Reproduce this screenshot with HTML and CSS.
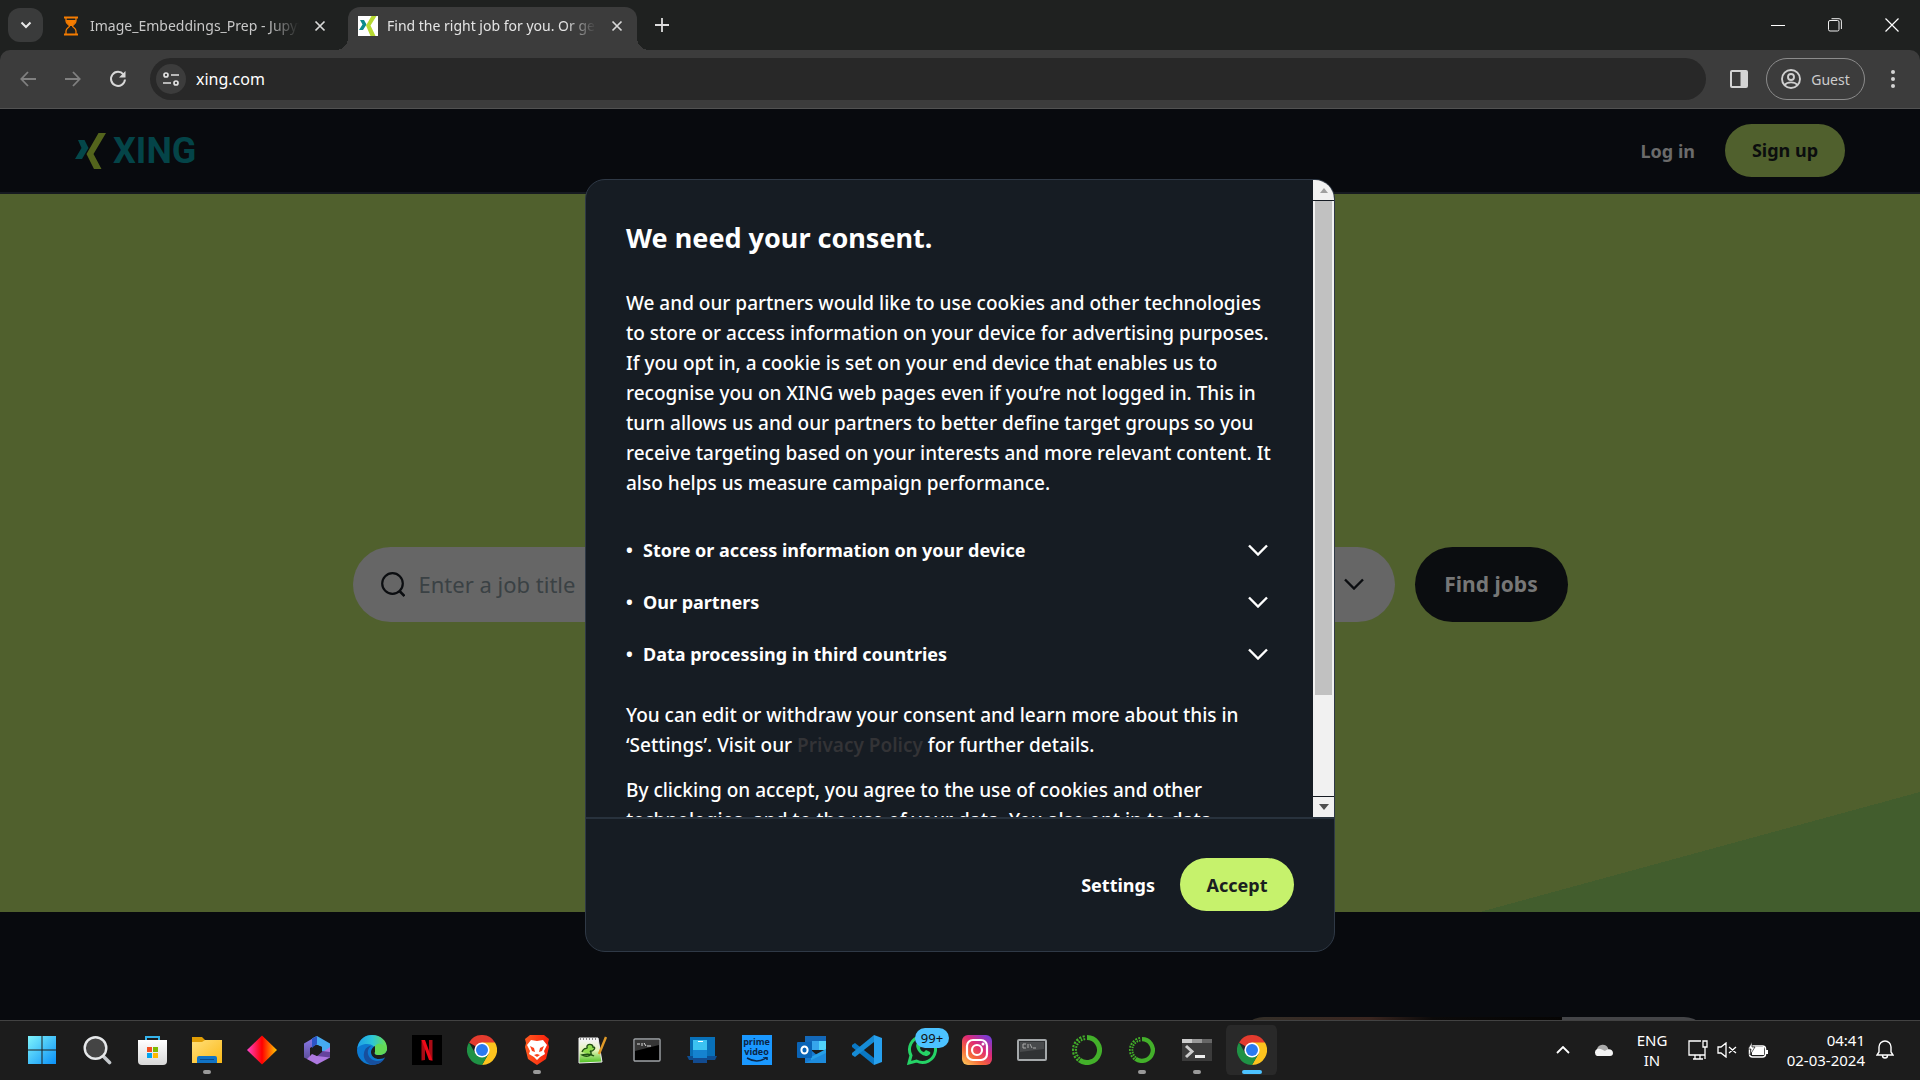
FILE: index.html
```html
<!DOCTYPE html>
<html lang="en">
<head>
<meta charset="utf-8">
<title>Find the right job for you. Or get found. | XING</title>
<link rel="stylesheet" href="styles.css">
</head>
<body>
<svg width="0" height="0" class="defs" aria-hidden="true">
  <defs>
    <linearGradient id="win" x1="0" y1="0" x2="1" y2="1"><stop offset="0" stop-color="#7ff4fb"/><stop offset="1" stop-color="#0a90f8"/></linearGradient>
    <linearGradient id="bag" x1="0" y1="0" x2="0" y2="1"><stop offset="0" stop-color="#fff"/><stop offset="1" stop-color="#d8d8d8"/></linearGradient>
    <linearGradient id="folder" x1="0" y1="0" x2="1" y2="1"><stop offset="0" stop-color="#ffdf7a"/><stop offset="1" stop-color="#fbb917"/></linearGradient>
    <linearGradient id="dia"><stop offset="0" stop-color="#f4c"/><stop offset=".5" stop-color="#f00"/><stop offset="1" stop-color="#fc0"/></linearGradient>
    <linearGradient id="edgeTop"><stop offset="0" stop-color="#1e9fe8"/><stop offset=".5" stop-color="#2cc6d8"/><stop offset="1" stop-color="#6ee04a"/></linearGradient>
    <linearGradient id="brave"><stop offset="0" stop-color="#ff5a20"/><stop offset="1" stop-color="#f8200c"/></linearGradient>
    <linearGradient id="note" x1="0" y1="0" x2="0" y2="1"><stop offset=".1" stop-color="#f4f4f4"/><stop offset=".5" stop-color="#e4f3b8"/><stop offset="1" stop-color="#49c01c"/></linearGradient>
    <linearGradient id="insta" x1="0" y1="1" x2=".8" y2="0"><stop offset="0" stop-color="#fed35c"/><stop offset=".35" stop-color="#f5673a"/><stop offset=".65" stop-color="#e02a74"/><stop offset="1" stop-color="#7b3bd4"/></linearGradient>
    <linearGradient id="m1" x1="0" y1="0" x2="0" y2="1"><stop offset="0" stop-color="#8e7df0"/><stop offset="1" stop-color="#5a4b96"/></linearGradient>
    <symbol id="chrome" viewBox="0 0 30 30">
      <path d="M15 15 2 7.500A15 15 0 0 1 28 7.500Z" fill="#e33b2e"/>
      <path d="M28 7.500A15 15 0 0 1 15 30L21.500 18.700 15 7.500Z" fill="#fcc31e"/>
      <path d="M2 7.500A15 15 0 0 0 15 30L21.500 18.700 8.500 18.700Z" fill="#1f9245"/>
      <circle cx="15" cy="15" r="7.600" fill="#fff"/><circle cx="15" cy="15" r="6" fill="#2a7af0"/>
    </symbol>
    <symbol id="chevron" viewBox="0 0 20 12"><path d="m1 1.500 9 9 9-9" fill="none" stroke="currentColor" stroke-width="2.400"/></symbol>
    <symbol id="cross" viewBox="0 0 12 12"><path d="m1.500 1.500 9 9m0-9-9 9" fill="none" stroke="currentColor" stroke-width="1.700"/></symbol>
    <symbol id="ring" viewBox="0 0 30 30">
      <path d="M15 2.500A12.500 12.500 0 1 1 7.500 25" fill="none" stroke="#43b02a" stroke-width="5"/>
      <path d="M13 2.600A12.500 12.500 0 0 0 7.500 25" fill="none" stroke="#43b02a" stroke-width="5" stroke-dasharray="2 1.300"/>
      <path d="M13 2.600A12.500 12.500 0 0 0 7.500 25" fill="none" stroke="#1c1c1c" stroke-width="1" stroke-dasharray="3 1"/>
    </symbol>
  </defs>
</svg>

<div class="screen">
  <div class="tabstrip">
    <button class="tab-search" aria-label="Search tabs"><svg width="12" height="8" viewBox="0 0 12 8"><path d="m1.500 1.500 4.500 4.500 4.500-4.500" fill="none" stroke="#e8e8e8" stroke-width="2"/></svg></button>
    <div class="tab">
      <svg width="20" height="20" viewBox="0 0 20 20"><path d="M3 1.500h14M3 18.500h14" stroke="#f57c00" stroke-width="2"/><path d="M5 2v3c0 3 3.500 3.500 3.500 5S5 12 5 15v3M15 2v3c0 3-3.500 3.500-3.500 5s3.500 2 3.500 5v3" fill="none" stroke="#f57c00" stroke-width="1.300"/><path d="M5 4h10c0 3-3.500 4-3.500 6h-3C8.500 8 5 7 5 4Z" fill="#f57c00"/></svg>
      <span class="tab-title">Image_Embeddings_Prep - Jupyter</span>
      <button class="tab-close" aria-label="Close tab"><svg width="12" height="12"><use href="#cross"/></svg></button>
    </div>
    <div class="tab tab-active">
      <svg width="20" height="20" viewBox="0 0 20 20"><path d="M0 0h20v20H0z" fill="#fff"/><path d="M2 4h4l2.500 4.500L5 14H1l3.500-5.500Z" fill="#0a8a8c"/><path d="M13.500 0h5l-6 9.500 5 10.500h-5L8 9.500Z" fill="#b6d832"/></svg>
      <span class="tab-title">Find the right job for you. Or get</span>
      <button class="tab-close" aria-label="Close tab"><svg width="12" height="12"><use href="#cross"/></svg></button>
    </div>
    <button class="new-tab" aria-label="New tab"><svg width="14" height="14" viewBox="0 0 14 14"><path d="M7 0v14M0 7h14" stroke="#ddd" stroke-width="1.800"/></svg></button>
    <div class="window-controls">
      <button aria-label="Minimize"><svg width="14" height="14" viewBox="0 0 14 14"><path d="M0 7.500h14" stroke="#fff"/></svg></button>
      <button aria-label="Restore"><svg width="14" height="14" viewBox="0 0 14 14"><rect x=".5" y="2.500" width="10.500" height="10.500" rx="1.500" fill="none" stroke="#eee"/><path d="M3.500.7H11a2.400 2.400 0 0 1 2.400 2.400V11" fill="none" stroke="#eee"/></svg></button>
      <button aria-label="Close"><svg width="14" height="14" viewBox="0 0 14 14"><path d="m.5.500 13 13m0-13-13 13" stroke="#fff" stroke-width="1.200"/></svg></button>
    </div>
  </div>

  <div class="toolbar">
    <div class="nav">
      <button aria-label="Back" disabled><svg width="16" height="16" viewBox="0 0 16 16"><path d="M16 8H1.500M8 1 1.300 8 8 15" fill="none" stroke="#808080" stroke-width="1.800"/></svg></button>
      <button aria-label="Forward" disabled><svg width="16" height="16" viewBox="0 0 16 16"><path d="M0 8h14.500M8 1l6.700 7L8 15" fill="none" stroke="#808080" stroke-width="1.800"/></svg></button>
      <button aria-label="Reload"><svg width="18" height="18" viewBox="0 0 18 18"><path d="M14.500 4.500A7 7 0 1 0 16 9.500" fill="none" stroke="#d8d8d8" stroke-width="2"/><path d="M16.500 1v6.500H10Z" fill="#d8d8d8"/></svg></button>
    </div>
    <div class="omnibox">
      <button class="site-info" aria-label="Site information"><svg width="16" height="14" viewBox="0 0 16 14"><g fill="none" stroke="#e0e0e0" stroke-width="1.700"><circle cx="3" cy="3" r="2"/><path d="M8 3h8M0 11h8"/><circle cx="13" cy="11" r="2"/></g></svg></button>
      <input class="url" type="text" value="xing.com" aria-label="Address">
    </div>
    <button class="side-panel" aria-label="Side panel"><svg width="18" height="18" viewBox="0 0 18 18"><rect x="1" y="1" width="16" height="16" rx="1" fill="none" stroke="#d4d4d4" stroke-width="2"/><path d="M10.500 1H17v16h-6.500z" fill="#d4d4d4"/></svg></button>
    <button class="guest"><svg width="20" height="20" viewBox="0 0 20 20"><g fill="none" stroke="#d0d0d0" stroke-width="1.900"><circle cx="10" cy="10" r="9"/><circle cx="10" cy="8" r="3"/><path d="M3.500 16c3-3.500 10-3.500 13 0"/></g></svg>Guest</button>
    <button class="menu" aria-label="Menu"><svg width="4" height="18" viewBox="0 0 4 18"><g fill="#d4d4d4"><circle cx="2" cy="2" r="2"/><circle cx="2" cy="9" r="2"/><circle cx="2" cy="16" r="2"/></g></svg></button>
  </div>

  <div class="viewport">
    <header class="site-header">
      <a class="logo" href="#" aria-label="XING"><svg width="32" height="36" viewBox="0 0 32 36"><path d="M3 7h6.500l4 8-6.500 11H0l6.500-11Z" fill="#04474a"/><path d="M23.500 0H31L18.500 21 26.500 36H19L11.500 21Z" fill="#53641c"/></svg><span>XING</span></a>
      <nav><a class="login" href="#">Log in</a><a class="signup" href="#">Sign up</a></nav>
    </header>
    <main>
      <section class="hero">
        <form class="search">
          <div class="search-box">
            <svg width="24" height="25" viewBox="0 0 24 25"><circle cx="11.500" cy="11.500" r="10.300" fill="none" stroke="#0b0d10" stroke-width="2.200"/><path d="m18 18.500 5.500 5.500" stroke="#0b0d10" stroke-width="2.600"/></svg>
            <input type="text" placeholder="Enter a job title" aria-label="Job title">
            <button type="button" aria-label="More filters"><svg width="20" height="12"><use href="#chevron"/></svg></button>
          </div>
          <button class="find" type="button">Find jobs</button>
        </form>
      </section>
      <section class="below"><div class="teaser"><div class="teaser-photo"></div><div class="teaser-text"></div></div></section>
    </main>

    <div class="overlay">
      <div class="dialog" role="dialog" aria-labelledby="consent-title">
        <div class="dialog-main">
          <div class="dialog-body">
            <h2 id="consent-title">We need your consent.</h2>
            <p class="intro">We and our partners would like to use cookies and other technologies<br>to store or access information on your device for advertising purposes.<br>If you opt in, a cookie is set on your end device that enables us to<br>recognise you on XING web pages even if you’re not logged in. This in<br>turn allows us and our partners to better define target groups so you<br>receive targeting based on your interests and more relevant content. It<br>also helps us measure campaign performance.</p>
            <ul>
              <li><button><span class="dot">•</span><span>Store or access information on your device</span><svg width="20" height="12"><use href="#chevron"/></svg></button></li>
              <li><button><span class="dot">•</span><span>Our partners</span><svg width="20" height="12"><use href="#chevron"/></svg></button></li>
              <li><button><span class="dot">•</span><span>Data processing in third countries</span><svg width="20" height="12"><use href="#chevron"/></svg></button></li>
            </ul>
            <p>You can edit or withdraw your consent and learn more about this in<br>‘Settings’. Visit our <a href="#">Privacy Policy</a> for further details.</p>
            <p>By clicking on accept, you agree to the use of cookies and other<br>technologies, and to the use of your data. You also opt in to data</p>
          </div>
          <div class="scrollbar" aria-hidden="true">
            <div class="arrow"><svg width="8" height="5" viewBox="0 0 8 5"><path d="M0 5 4 0l4 5z" fill="#a0a0a0"/></svg></div>
            <div class="track"><div class="thumb"></div></div>
            <div class="arrow"><svg width="10" height="6" viewBox="0 0 10 6"><path d="M0 0h10L5 6z" fill="#505050"/></svg></div>
          </div>
        </div>
        <div class="dialog-footer"><button class="settings">Settings</button><button class="accept">Accept</button></div>
      </div>
    </div>
  </div>

  <div class="taskbar">
    <div class="apps">
      <button aria-label="Start"><svg width="30" height="30" viewBox="0 0 30 30"><path d="M1 1h13.500v13.500H1zM15.500 1H29v13.500H15.500zM1 15.500h13.500V29H1zM15.500 15.500H29V29H15.500z" fill="url(#win)"/></svg></button>
      <button aria-label="Search"><svg width="30" height="30" viewBox="0 0 30 30"><path d="m20 20 7.500 7.500" stroke="#c4c8cc" stroke-width="3.600" stroke-linecap="round"/><circle cx="13.500" cy="13" r="10.800" fill="#444" stroke="#e6e8ea" stroke-width="2.400"/></svg></button>
      <button aria-label="Store"><svg width="30" height="30" viewBox="0 0 30 30"><path d="M9 7V2h13v5" fill="none" stroke="#35b4ec" stroke-width="2"/><path d="M1 5h29v21a4 4 0 0 1-4 4H5a4 4 0 0 1-4-4z" fill="url(#bag)"/><path d="M10 12h5v5h-5z" fill="#f25022"/><path d="M16 12h5v5h-5z" fill="#7fba00"/><path d="M10 18h5v5h-5z" fill="#00a4ef"/><path d="M16 18h5v5h-5z" fill="#ffb900"/></svg></button>
      <button class="running" aria-label="File Explorer"><svg width="30" height="30" viewBox="0 0 30 30"><path d="M0 2h10l3 3v4H0z" fill="#e09d05"/><path d="M0 7h10l3-2h17v23H0z" fill="url(#folder)"/><path d="M5 28v-5a2 2 0 0 1 2-2h16a2 2 0 0 1 2 2v5z" fill="#1173c5"/><path d="M8 24.500h14" stroke="#084a8c"/></svg></button>
      <button aria-label="Diamond"><svg width="30" height="30" viewBox="0 0 30 30"><path d="M15 .5 30 15 15 29.500 0 15z" fill="url(#dia)"/></svg></button>
      <button aria-label="Microsoft 365"><svg width="30" height="30" viewBox="0 0 30 30"><path d="M15 1 2 8.500v14l6 3V13l7-4z" fill="url(#m1)"/><path d="M15 1 28 8.500v13L20 16v-4l-7-3-3 2V3.500z" fill="#46aaf0"/><path d="M28 17v5.500L15 29.500 5 24l5-5 5 2 13-9z" fill="#ad78df"/><path d="M10 3.500 15 1v8l-5 4z" fill="#2c54c6"/><path d="m20 16 8 1v5.500L15 21z" fill="#65429c"/><path d="m11 12 4-2 5 2v5l-5 4-4-3z" fill="#1c1c1c"/></svg></button>
      <button aria-label="Edge"><svg width="30" height="30" viewBox="0 0 30 30"><circle cx="15" cy="15" r="15" fill="#0d79d1"/><path d="M.5 13C2 4 8 0 15 0c9 0 15 6 15 13 0 5-4 7-8 7-3 0-5-1-4-3 2-5-3-8-8-8-4 0-8 2-9.500 4Z" fill="url(#edgeTop)"/><path d="M14 11c-6 5-3 14 6 15 4 0 6-1 8-3-3 5-8 7-13 7-7-2-9-8-8-12 1-5 4-7 7-7Z" fill="#174f9d"/><path d="M18 11c-7 4-4 13 4 13 3 0 5-1 7-2l1-2v-5c-2 5-6 5-9 5-3 0-4-1-3-3 1-2 1-4 0-6Z" fill="#1c1c1c"/><path d="M18 11c4-5 10 0 12 2 0 5-4 7-8 7-3 0-5-1-4-3Z" fill="#62d956"/></svg></button>
      <button aria-label="Netflix"><svg width="30" height="30" viewBox="0 0 30 30"><path d="M0 0h30v30H0z" fill="#000"/><path d="M9.500 5H13v20l-3.500.500zM17 5h3.500v20.500L17 25z" fill="#a90b15"/><path d="M9.500 5H13l7.500 20.500L17 25z" fill="#ee0a18"/></svg></button>
      <button aria-label="Chrome"><svg width="30" height="30"><use href="#chrome"/></svg></button>
      <button class="running" aria-label="Brave"><svg width="30" height="30" viewBox="0 0 30 30"><path d="m8 0-5 4 1 4-1 4 3 12 9 6 9-6 3-12-1-4 1-4-5-4z" fill="url(#brave)"/><path d="m9 5 6 1 6-1 4 5-3 6 1 3-5 3-3 3-3-3-5-3 1-3-3-6z" fill="#fff"/><path d="m8 11 4 2 1 4-3-1zM22 11l-4 2-1 4 3-1zM12 20l3-1 3 1-3 2z" fill="#fb401a"/></svg></button>
      <button aria-label="Notepad++"><svg width="30" height="30" viewBox="0 0 30 30"><path d="M2 3h19l4 24-23 1z" fill="url(#note)" stroke="#eee"/><path d="M3 4h18" stroke="#888" stroke-dasharray="1 2" stroke-width="2"/><path d="M5 17c2-6 6-2 5-5s6-4 6 0c4 0 0 5-3 4 4 4-3 7-8 4 4-1 9-1 12 1" fill="#8fdc4e" stroke="#1f4f12" stroke-width="1.400"/><path d="m29 2-7 17" stroke="#e09a28" stroke-width="2.400"/></svg></button>
      <button aria-label="Command Prompt"><svg width="30" height="30" viewBox="0 0 30 30"><rect x="2" y="4" width="26" height="22" rx="1" fill="#000" stroke="#a0a4a8" stroke-width="1.400"/><path d="M3 5h24v5L3 16z" fill="#363636"/><path d="M5 9h3M10 8v3M12 8l2 3M15 11h4" stroke="#ddd"/></svg></button>
      <button aria-label="Phone Link"><svg width="30" height="30" viewBox="0 0 30 30"><path d="M3 2h25v19H3z" fill="#0870b8"/><path d="M0 21h30l-2 4H2z" fill="#0d4e92"/><path d="M6 5h14v23H6z" fill="#1583d0"/><path d="M6 5h14v10H6z" fill="#3cc2f1"/><path d="M6 23h14v5H6z" fill="#124b90"/><path d="M11 6.500h5" stroke="#fff"/></svg></button>
      <button aria-label="Prime Video"><span class="prime"><span>prime</span><span>video</span><svg width="22" height="6" viewBox="0 0 22 6"><path d="M1 1q10 6 19 0m-3-1h4v3" fill="none" stroke="#0b2545" stroke-width="1.500"/></svg></span></button>
      <button aria-label="Outlook"><svg width="30" height="30" viewBox="0 0 30 30"><path d="M8 1h21v14H8z" fill="#1368b8"/><path d="M15 6h7v9h-7z" fill="#36a5ec"/><path d="M22 6h7v9h-7z" fill="#51d3fa"/><path d="M8 15h6l15 13H8z" fill="#167ad1"/><path d="M14 22 29 14v14H14z" fill="#279fe7"/><path d="M8 28 29 18v10z" fill="#1d8bdc"/><rect y="7" width="15" height="16" rx="1" fill="#0a63b5"/><ellipse cx="7.500" cy="15" rx="3.100" ry="3.600" fill="none" stroke="#fff" stroke-width="2"/></svg></button>
      <button aria-label="VS Code"><svg width="30" height="30" viewBox="0 0 30 30"><path d="m0 10 3-2 19 15v7L0 12z" fill="#0a78c4"/><path d="m0 20 3 2L22 7V0L0 18z" fill="#168bd5"/><path d="m22 0 8 3v24l-8 3z" fill="#27a0ee"/></svg></button>
      <button aria-label="WhatsApp"><svg width="30" height="30" viewBox="0 0 30 30"><path d="m2 28 2-7.500A13 13 0 1 1 9.500 26z" fill="none" stroke="#25d366" stroke-width="3"/><path d="M10 8c-3 4 3 13 10 13 3-1 4-3 3-4l-4-2-2 2c-2 0-4-3-4-4l1-2-2-4z" fill="#25d366"/></svg><span class="badge">99+</span></button>
      <button aria-label="Instagram"><svg width="30" height="30" viewBox="0 0 30 30"><rect width="30" height="30" rx="6" fill="url(#insta)"/><g fill="none" stroke="#fff" stroke-width="2.200"><rect x="5" y="5" width="20" height="20" rx="6"/><circle cx="15" cy="15" r="5"/></g><circle cx="21" cy="9" r="1.500" fill="#fff"/></svg></button>
      <button aria-label="Console"><svg width="30" height="30" viewBox="0 0 30 30"><rect x="1" y="5" width="28" height="20" rx="1" fill="#303234" stroke="#a4a8aa" stroke-width="2"/><path d="M3 7h24v7L3 17z" fill="#484a4c"/><path d="M9 9H6v4h3M11 9v4M13 9l2 4M16 13h3" fill="none" stroke="#aaa"/></svg></button>
      <button aria-label="Anaconda"><svg width="30" height="30"><use href="#ring"/></svg></button>
      <button class="running" aria-label="Anaconda Navigator"><svg width="26" height="26"><use href="#ring"/></svg></button>
      <button class="running" aria-label="Terminal"><svg width="30" height="30" viewBox="0 0 30 30"><path d="M0 4h30v22H0z" fill="#3b3b3b"/><path d="M0 4h10v4H0z" fill="#ccc"/><path d="M10 4h10v4H10z" fill="#999"/><path d="M20 4h10v4H20z" fill="#666"/><path d="m4 11 6 5.500L4 22" fill="none" stroke="#ccc" stroke-width="3"/><path d="M13 21.500h10" stroke="#eee" stroke-width="3"/></svg></button>
      <button class="current" aria-label="Chrome, current window"><svg width="30" height="30"><use href="#chrome"/></svg></button>
    </div>
    <div class="tray">
      <button aria-label="Hidden icons"><svg width="14" height="8" viewBox="0 0 14 8"><path d="m1 7 6-6 6 6" fill="none" stroke="#fff" stroke-width="1.800"/></svg></button>
      <svg class="cloud" width="20" height="14" viewBox="0 0 20 14"><path d="M4 6a6 6 0 0 1 11-1l1 5H4z" fill="#aaa"/><path d="M4 13a4 4 0 0 1 0-7c4-1 5 1 8 2 3-3 8-2 8 2a3 3 0 0 1-3 3z" fill="#f4f4f4"/></svg>
      <span class="lang">ENG<br>IN</span>
      <svg class="net" width="20" height="20" viewBox="0 0 20 20"><g fill="none" stroke="#fff" stroke-width="1.300"><path d="M13 1H1v14h16v-4M5 19h10M7 15v4M12 15v4M15 1h4v6h-4zM17 7v12"/></g></svg>
      <svg class="sound" width="20" height="16" viewBox="0 0 20 16"><g fill="none" stroke="#fff" stroke-width="1.300"><path d="M1 5v6h3l5 4V1L4 5zM12 5l7 6M19 5l-7 6"/></g></svg>
      <svg class="battery" width="20" height="16" viewBox="0 0 20 16"><rect x="1.500" y="4" width="16" height="11" rx="3" fill="none" stroke="#fff" stroke-width="1.500"/><path d="M4 13V8l3-3h9v8zM18 8h2v4h-2z" fill="#fff"/><path d="M4 0 0 7h3l-1 6 5-8H4z" fill="#fff" stroke="#1c1c1c" stroke-width=".7"/></svg>
      <span class="clock">04:41<br>02-03-2024</span>
      <svg class="bell" width="18" height="19" viewBox="0 0 18 19"><path d="M3 12V7a6 6 0 0 1 12 0v5l2 3H1zM6.500 15.500a2.500 2.500 0 0 0 5 0" fill="none" stroke="#fff" stroke-width="1.400"/></svg>
    </div>
  </div>
</div>
</body>
</html>
```
FILE: styles.css
```css
* { box-sizing: border-box; }
body { margin: 0; font-family: "Noto Sans", "Open Sans", sans-serif; color: #fff; background: #080a0e; }
button, input { font: inherit; color: inherit; background: none; border: 0; padding: 0; margin: 0; outline: 0; }
a { color: inherit; text-decoration: none; }
svg { flex: none; display: block; }
.defs { position: absolute; }

.screen { height: 100vh; display: flex; flex-direction: column; overflow: hidden; background: #1f2120; }

/* Tab strip */
.tabstrip { height: 50px; flex: none; display: flex; align-items: flex-end; padding-left: 8px; }
.tab-search { width: 35px; height: 34px; margin-bottom: 8px; border-radius: 12px; background: #3a3b3b; display: grid; place-items: center; }
.tab { display: flex; align-items: center; width: 289px; height: 43px; padding: 0 14px 6px 10px; gap: 9px; font-size: 14px; color: #c8c8c8; position: relative; }
.tab:not(.tab-active) { margin: 0 8px; }
.tab-title { flex: 1; white-space: nowrap; overflow: hidden; mask-image: linear-gradient(to right, #000 85%, transparent); }
.tab-close { width: 12px; height: 12px; margin-left: 6px; color: #d8d8d8; }
.tab-active { background: #3c3c3c; border-radius: 12px 12px 0 0; color: #e4e4e4; }
.tab-active::before, .tab-active::after { content: ""; position: absolute; bottom: 0; width: 12px; height: 12px; }
.tab-active::before { left: -12px; background: radial-gradient(circle at 0 0, transparent 12px, #3c3c3c 12px); }
.tab-active::after { right: -12px; background: radial-gradient(circle at 100% 0, transparent 12px, #3c3c3c 12px); }
.new-tab { width: 50px; height: 50px; display: grid; place-items: center; }
.window-controls { margin-left: auto; display: flex; height: 50px; }
.window-controls button { width: 57px; display: grid; place-items: center; }

/* Toolbar */
.toolbar { height: 59px; flex: none; display: flex; align-items: center; background: #3c3c3c; border-bottom: 1px solid #525252; border-radius: 10px 10px 0 0; padding: 0 8px 0 5px; }
.nav { display: flex; }
.nav button { width: 45px; height: 42px; display: grid; place-items: center; }
.omnibox { flex: 1; height: 42px; border-radius: 21px; background: #282828; margin-left: 10px; display: flex; align-items: center; padding-left: 6px; }
.site-info { width: 30px; height: 30px; border-radius: 50%; background: #3c3c3c; display: grid; place-items: center; }
.url { flex: 1; margin-left: 10px; font-size: 16px; }
.side-panel { width: 60px; height: 42px; padding-left: 6px; display: grid; place-items: center; }
.guest { width: 99px; height: 42px; border: 1px solid #8c8c8c; border-radius: 21px; display: flex; align-items: center; justify-content: center; gap: 10px; font-size: 14px; color: #ccc; }
.menu { width: 47px; height: 42px; display: grid; place-items: center; padding-left: 8px; }

/* Web page */
.viewport { flex: 1; min-height: 0; overflow: hidden; position: relative; background: #080a0e; }
.site-header { height: 85px; display: flex; align-items: center; justify-content: space-between; padding: 0 75px; background: #080a0e; border-bottom: 2px solid #161a20; }
.logo { display: flex; align-items: center; gap: 6px; font-size: 36px; font-weight: 700; line-height: 36px; color: #044448; font-family: Roboto, sans-serif; }
.site-header nav { display: flex; align-items: center; gap: 30px; font-size: 18px; font-weight: 700; }
.login { color: #6b6b6b; }
.signup { width: 120px; line-height: 53px; border-radius: 27px; text-align: center; background: #50602d; color: #0b0d0e; }
.hero { height: 718px; display: flex; align-items: center; justify-content: center; background: linear-gradient(to top left, #425d2d 50%, #50602d 50%) bottom right / 440px 120px no-repeat #50602d; padding-bottom: 32px; padding-top: 94px; }
.search { display: flex; gap: 20px; width: 1215px; max-width: 90%; }
.search-box { flex: 1; height: 75px; border-radius: 38px; background: #666; display: flex; align-items: center; padding: 0 31px 0 28px; color: #0b0d10; }
.search-box input { flex: 1; margin-left: 14px; font-size: 22px; }
.search-box input::placeholder { color: #3a4144; opacity: 1; }
.find { width: 153px; height: 75px; border-radius: 38px; background: #0b0d10; color: #777; font-size: 21px; font-weight: 700; }
.below { padding: 105px 212px 0; display: flex; justify-content: flex-end; }
.teaser { display: flex; width: 468px; height: 200px; border-radius: 24px; overflow: hidden; }
.teaser-photo { flex: 1; background: linear-gradient(to right, #333029, #3a2620 40%, #0b0a0a 60%, #060504); }
.teaser-text { width: 146px; background: #444548; }

/* Consent dialog */
.overlay { position: absolute; inset: 0; padding: 70px 0 68px; display: flex; justify-content: center; }
.dialog { width: 750px; border: 1px solid #2f3946; border-radius: 20px; background: #161c23; overflow: hidden; display: flex; flex-direction: column; }
.dialog-main { flex: 1; min-height: 0; display: flex; }
.dialog-body { flex: 1; overflow: hidden; padding: 40px 45px 0 40px; font-size: 19px; font-weight: 500; line-height: 30px; white-space: nowrap; }
.dialog-body h2 { margin: 0 0 32px; font-size: 27px; line-height: 36px; }
.dialog-body p { margin: 0 0 15px; }
.dialog-body .intro { margin: 0; }
.dialog-body ul { list-style: none; margin: 26px 0 20px; padding: 0; }
.dialog-body li button { width: 100%; height: 52px; display: flex; align-items: center; font-weight: 700; font-size: 18px; }
.dialog-body li svg { margin-left: auto; }
.dot { width: 17px; text-align: left; }
.dialog-body p a { color: #333336; font-weight: 600; }
.scrollbar { width: 21px; display: flex; flex-direction: column; gap: 1px; }
.arrow { height: 20px; background: #f1f1f1; display: grid; place-items: center; }
.track { flex: 1; background: #f1f1f1; padding: 0 2px; }
.thumb { height: 83%; background: #c1c1c1; }
.dialog-footer { height: 134px; flex: none; border-top: 2px solid #28323d; display: flex; justify-content: flex-end; align-items: flex-start; gap: 25px; padding: 39px 40px 0; font-size: 18px; font-weight: 700; }
.dialog-footer button { height: 53px; }
.accept { width: 114px; border-radius: 27px; background: #c6f26c; color: #1a2020; }

/* Taskbar */
.taskbar { height: 60px; flex: none; display: flex; justify-content: space-between; background: #1c1c1c; border-top: 1px solid #424242; position: relative; }
.apps { display: flex; padding: 0 0 2px 14px; align-items: center; }
.apps button { width: 55px; height: 50px; display: grid; place-items: center; position: relative; }
.running::after, .current::after { content: ""; position: absolute; bottom: 1px; left: 24px; width: 8px; height: 4px; border-radius: 2px; background: #999; }
.current { background: #292929; border-radius: 6px; background-clip: content-box; }
.apps .current { padding: 0 2px; }
.current::after { left: 18px; width: 20px; background: #4cc2ff; }
.prime { width: 30px; height: 30px; background: #1a98ff; color: #0b2545; font-family: "Open Sans", sans-serif; font-size: 9px; font-weight: 700; line-height: 10px; display: flex; flex-direction: column; align-items: center; padding-top: 2px; }
.badge { position: absolute; left: 21px; top: 3px; width: 34px; height: 20px; border-radius: 10px; background: #4cc2ff; color: #111; font-size: 13px; line-height: 20px; text-align: center; }
.tray { display: flex; align-items: center; padding: 0 26px 2px 0; font-size: 15px; line-height: 20px; }
.cloud { margin-left: 23px; }
.lang { width: 44px; margin-left: 17px; text-align: center; }
.net { margin-left: 14px; }
.sound { margin-left: 9px; }
.battery { margin-left: 11px; }
.clock { width: 90px; margin-left: 7px; text-align: right; }
.bell { margin-left: 11px; }
```
